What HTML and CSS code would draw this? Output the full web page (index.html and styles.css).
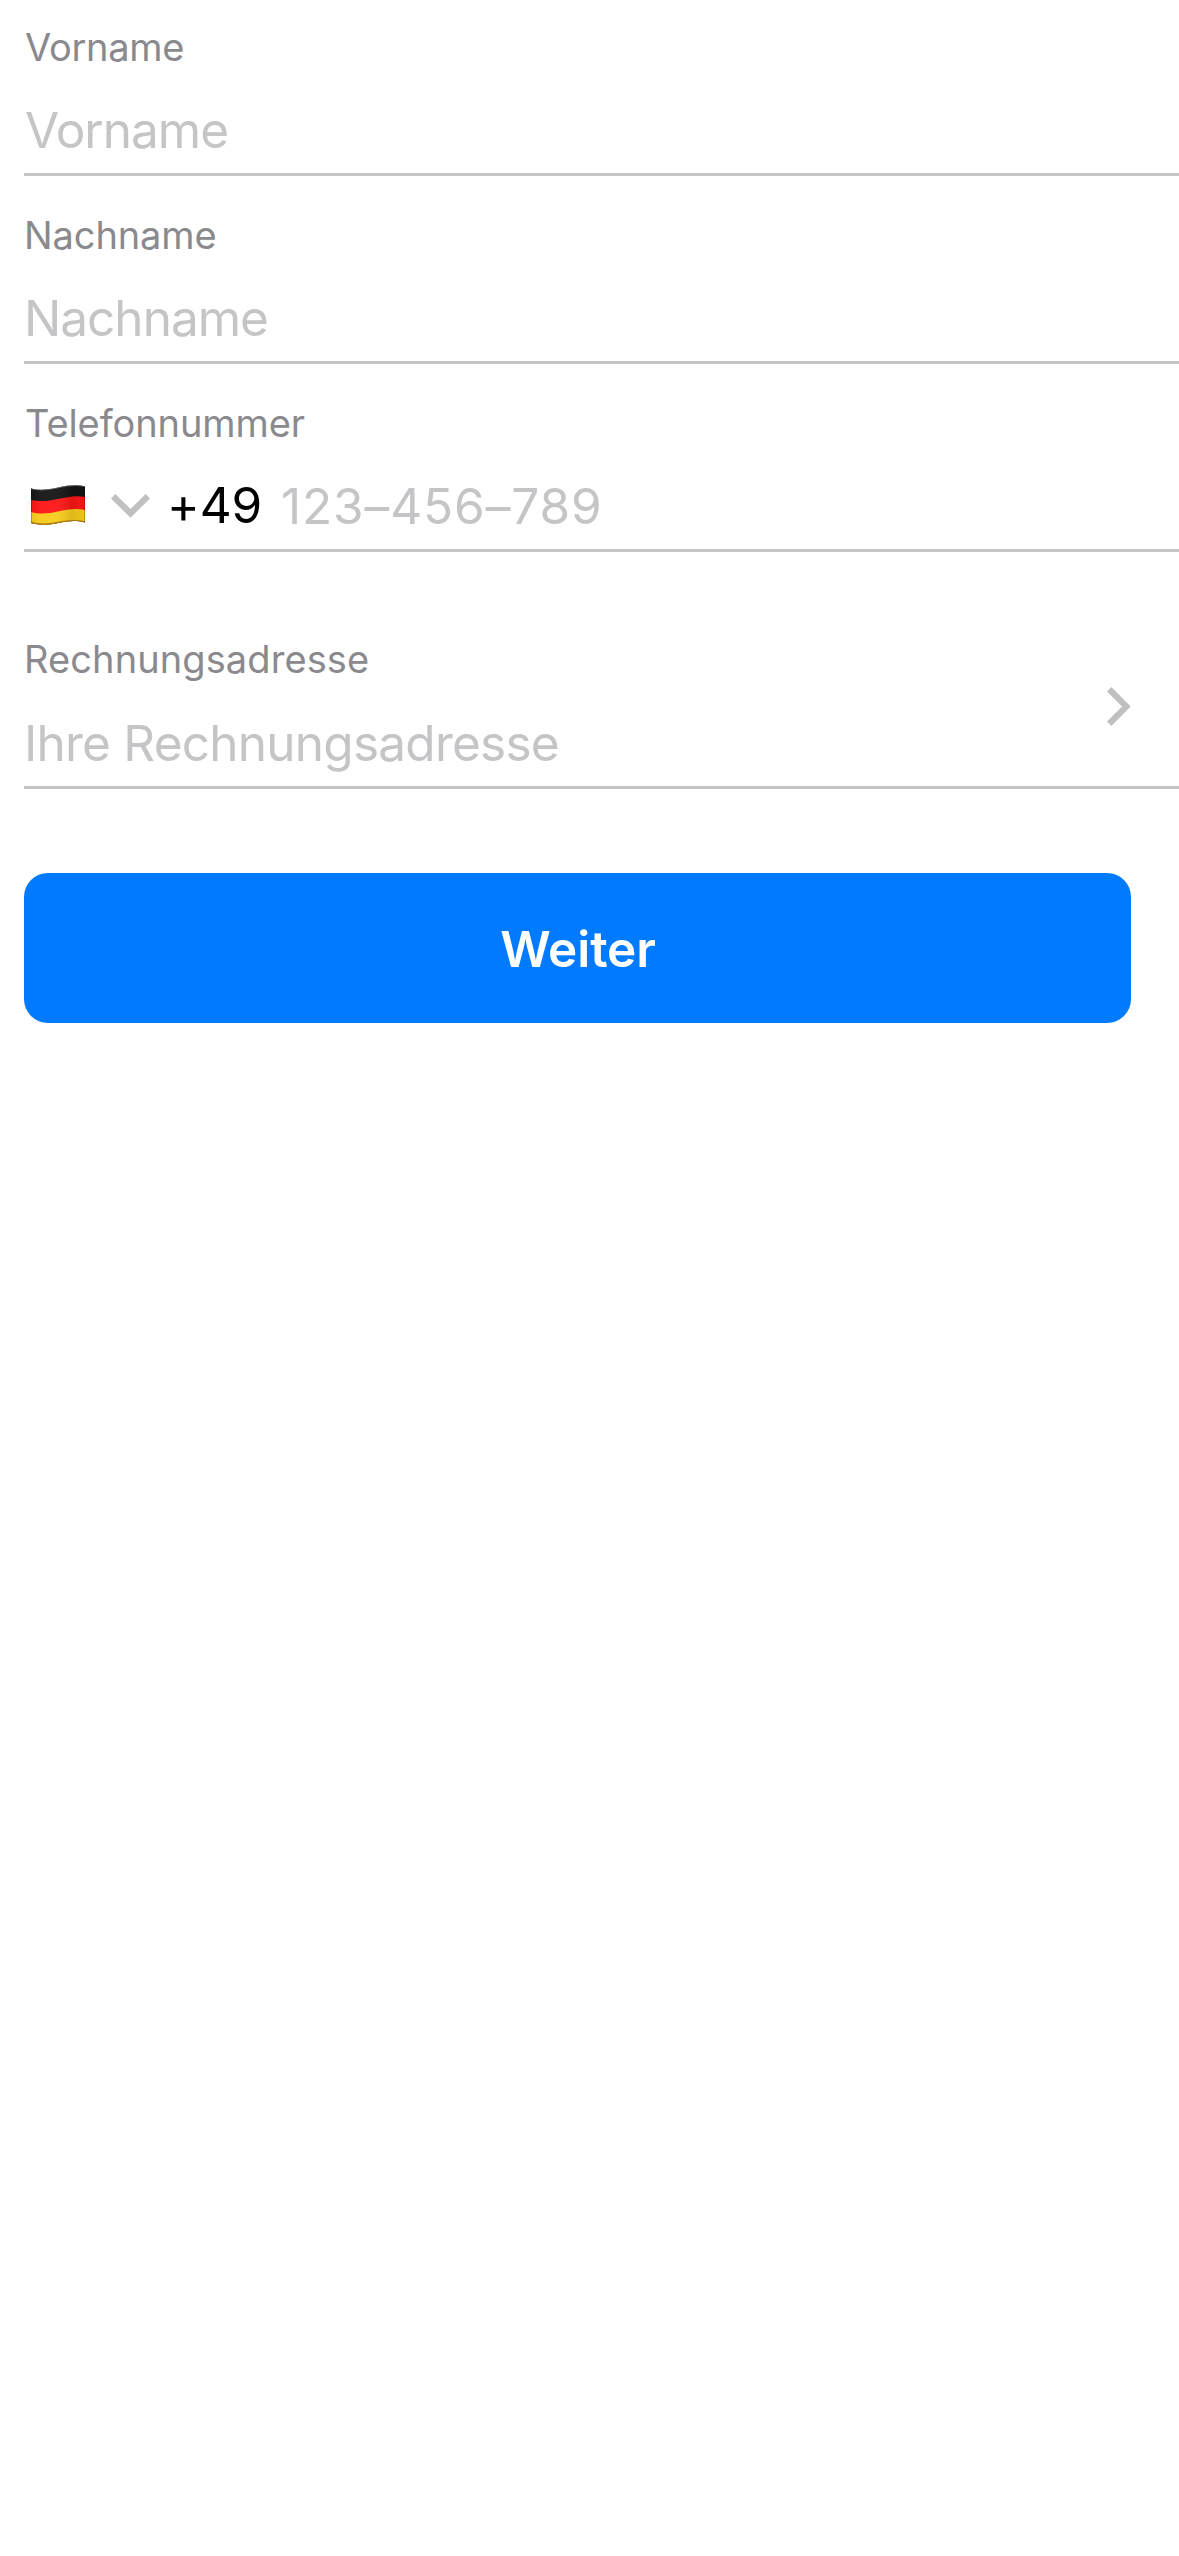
FILE: index.html
```html
<!DOCTYPE html>
<html lang="de">
<head>
<meta charset="utf-8">
<title>Kontaktdaten</title>
<link rel="stylesheet" href="styles.css">
</head>
<body>
<main class="form">
  <div class="field field-first-name">
    <div class="label label-first-name">Vorname</div>
    <div class="value placeholder">Vorname</div>
  </div>
  <div class="field">
    <div class="label">Nachname</div>
    <div class="value placeholder">Nachname</div>
  </div>
  <div class="field">
    <div class="label label-phone">Telefonnummer</div>
    <div class="value phone">
      <svg class="flag" viewBox="0 0 54 40" role="img" aria-label="Deutschland">
        <defs>
          <clipPath id="wave"><path d="M0 3.500C9 6 18 4.500 27 2.500S45-.5 54 1.200V37.500C45 35 36 36 27 38S9 40.500 0 38Z"/></clipPath>
          <linearGradient id="fold" x1="0" x2="1" y1="0" y2="0">
            <stop offset="0" stop-color="#000" stop-opacity=".06"/>
            <stop offset=".18" stop-color="#fff" stop-opacity=".04"/>
            <stop offset=".45" stop-color="#fff" stop-opacity=".05"/>
            <stop offset=".75" stop-color="#000" stop-opacity=".1"/>
            <stop offset="1" stop-color="#000" stop-opacity=".04"/>
          </linearGradient>
        </defs>
        <g clip-path="url(#wave)">
          <path fill="#151515" d="M0 0H54V40H0Z"/>
          <path fill="#fd1616" d="M0 15C9 17 18 16 27 14S45 10 54 12V40H0Z"/>
          <path fill="#f8cc1c" d="M0 27C9 29.500 18 28.500 27 26.500S45 23 54 25V40H0Z"/>
          <path fill="url(#fold)" d="M0 0H54V40H0Z"/>
          <path fill="none" stroke="#777" stroke-opacity=".75" stroke-width="1.500" d="M0 3.500C9 6 18 4.500 27 2.500S45-.5 54 1.200"/>
          <path fill="none" stroke="#806000" stroke-opacity=".7" stroke-width="2.400" d="M54 37.500C45 35 36 36 27 38S9 40.500 0 38"/>
          <path fill="none" stroke="#000" stroke-opacity=".3" stroke-width="1.500" d="M0 3V38M54 1V38"/>
        </g>
      </svg>
      <svg class="chevron-down" viewBox="0 0 39 24" aria-hidden="true"><path d="M0 4.400 4.400 0 19.500 15 34.600 0 39 4.400 19.500 23.700Z"/></svg>
      <span class="code">+49</span>
      <span class="number">123–456–789</span>
    </div>
  </div>
  <div class="field address">
    <div>
      <div class="label label-address">Rechnungsadresse</div>
      <div class="value placeholder placeholder-address">Ihre Rechnungsadresse</div>
    </div>
    <svg class="chevron-right" viewBox="0 0 24 39" aria-hidden="true"><path d="M4.400 0 0 4.400 15 19.500 0 34.600 4.400 39 23.700 19.500Z"/></svg>
  </div>
  <button class="submit" type="button">Weiter</button>
</main>
</body>
</html>
```
FILE: styles.css
```css
body {
  margin: 0;
  background: #fff;
  font-family: Inter, "Liberation Sans", sans-serif;
}

.form {
  display: flex;
  flex-direction: column;
  gap: 35px;
  padding: 23px 0 0 24px;
}

.field {
  border-bottom: 3px solid #c5c5c7;
  padding-bottom: 13px;
}

.field-first-name {
  text-indent: 1px;
}

.label {
  margin-bottom: 29px;
  color: #8a8a8e;
  font-size: 38px;
  line-height: 48px;
  letter-spacing: -0.1px;
}

.label-first-name {
  letter-spacing: -0.3px;
}

.label-phone {
  text-indent: 1px;
}

.label-address {
  margin-bottom: 30px;
  letter-spacing: 0.1px;
}

.value {
  height: 60px;
  font-size: 49.5px;
  line-height: 60px;
  white-space: nowrap;
}

.placeholder {
  color: #c5c5c7;
  letter-spacing: -1px;
}

.placeholder-address {
  letter-spacing: -0.76px;
}

.phone {
  display: flex;
  align-items: center;
  padding-left: 7px;
}

.flag {
  width: 54px;
  height: 40px;
  margin: 0 26px 2px 0;
}

.chevron-down {
  width: 39px;
  height: 24px;
  margin: 0 17px 1px 0;
  fill: #c0c0c0;
}

.code {
  width: 114px;
  padding-bottom: 2px;
  color: #000;
  letter-spacing: -0.1px;
}

.number {
  color: #c5c5c7;
  letter-spacing: 0.9px;
}

.address {
  display: flex;
  justify-content: space-between;
  align-items: flex-start;
  margin-top: 48px;
  padding-right: 48px;
}

.chevron-right {
  width: 24px;
  height: 39px;
  margin-top: 52px;
  fill: #c0c0c0;
}

.submit {
  height: 150px;
  margin: 49px 48px 0 0;
  padding: 1px 0 0 1px;
  border: 0;
  border-radius: 24px;
  background: #007aff;
  color: #fff;
  font: 600 49.5px/60px Inter, "Liberation Sans", sans-serif;
  letter-spacing: -0.1px;
}
```
